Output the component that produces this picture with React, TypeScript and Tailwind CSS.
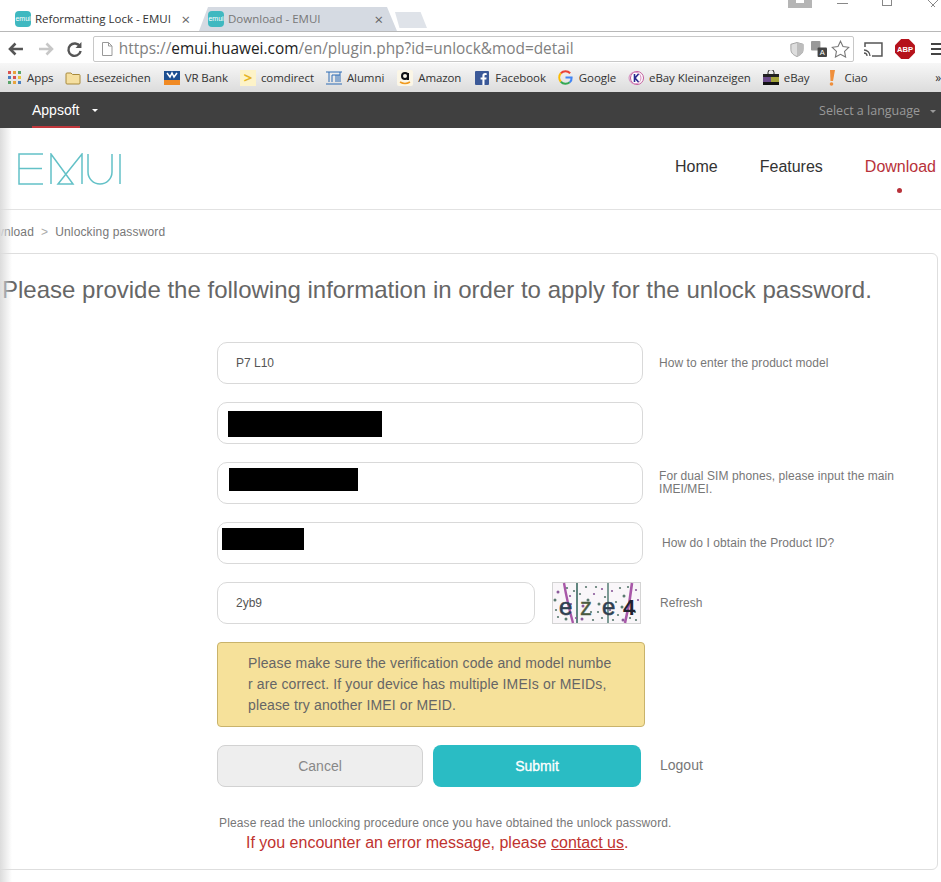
import React from "react";

const EmuiFav = () => (
  <span className="w-[16px] h-[16px] rounded-[4px] bg-[#3fb8c0] text-white text-[7px] leading-[16px] text-center shrink-0 [font-family:'Liberation_Sans',sans-serif]">
    emui
  </span>
);

const Tab = ({ title, active }: { title: string; active?: boolean }) => (
  <div
    className={
      "relative h-[24px] flex items-center shrink-0 [clip-path:polygon(0_100%,9px_0,calc(100%-10px)_0,100%_100%)] " +
      (active ? "w-[200px] bg-white pl-[12px] pr-[13px] text-[#333]" : "w-[198px] -ml-[4px] bg-[#d5dae2] pl-[9px] pr-[14px] text-[#777]")
    }
  >
    <EmuiFav />
    <span className="ml-[4px] text-[11.5px] whitespace-nowrap flex-1">{title}</span>
    <span className="text-[15px] leading-none text-[#666]">×</span>
  </div>
);

const bookmarks: [React.ReactNode, string, number][] = [
  [
    <svg width="15" height="15" viewBox="0 0 15 15">
      {[1, 6, 11].flatMap((y, j) =>
        [1, 6, 11].map((x, i) => (
          <rect key={`${i}${j}`} x={x} y={y} width="3" height="3" fill={["#d9534f", "#e8a33d", "#5aa469", "#4a7fc1", "#d9534f", "#e8c33d", "#5aa469", "#e8a33d", "#4a7fc1"][i + j * 3]} />
        ))
      )}
    </svg>,
    "Apps",
    12,
  ],
  [
    <svg width="16" height="14" viewBox="0 0 16 14">
      <path d="M1 3a1 1 0 0 1 1-1h4l1.5 1.5H14a1 1 0 0 1 1 1V12a1 1 0 0 1-1 1H2a1 1 0 0 1-1-1z" fill="#f5dfa0" stroke="#a88a3c" />
    </svg>,
    "Lesezeichen",
    13,
  ],
  [
    <svg width="16" height="14" viewBox="0 0 16 14">
      <rect width="16" height="9" fill="#1d4f91" />
      <rect y="9" width="16" height="5" fill="#f08a24" />
      <path d="M3 2l3 4 2-4 2 4 3-4" stroke="#fff" strokeWidth="1.5" fill="none" />
    </svg>,
    "VR Bank",
    12,
  ],
  [
    <span className="w-[16px] h-[16px] bg-[#fdf3c8] text-[#e6b422] text-[15px] font-bold leading-[15px] text-center">&gt;</span>,
    "comdirect",
    12,
  ],
  [
    <svg width="16" height="14" viewBox="0 0 16 14">
      <path d="M0 1h16M3 1v10M6 4v7M6 4h4v7M10 4h4M14 1v10M12 4v7M0 13h16" stroke="#2f6db5" strokeWidth="1" fill="none" />
    </svg>,
    "Alumni",
    13,
  ],
  [
    <svg width="16" height="16" viewBox="0 0 16 16">
      <rect width="16" height="16" rx="2" fill="#fbf6e6" />
      <path d="M3 12q5 3 10 0" stroke="#f09a1f" strokeWidth="1.5" fill="none" />
      <circle cx="8" cy="6" r="3" fill="none" stroke="#111" strokeWidth="2" />
      <path d="M11 3v7" stroke="#111" strokeWidth="2" />
    </svg>,
    "Amazon",
    13,
  ],
  [
    <svg width="14" height="14" viewBox="0 0 14 14">
      <rect width="14" height="14" rx="1" fill="#3b5998" />
      <path d="M9.5 14V8.5h1.8l.3-2.1H9.5V5c0-.6.2-1 1-1h1.2V2.200a14 14 0 0 0-1.600-.1C8.500 2.100 7.400 3 7.400 4.800v1.600H5.600v2.100h1.800V14z" fill="#fff" />
    </svg>,
    "Facebook",
    12,
  ],
  [
    <svg width="15" height="15" viewBox="0 0 16 16" fill="none" strokeWidth="2.200">
      <path d="M13 3.500A7 7 0 0 0 3 3.500" stroke="#ea4335" />
      <path d="M3 3.500a7 7 0 0 0 0 9" stroke="#fbbc05" />
      <path d="M3 12.500a7 7 0 0 0 9.500.5" stroke="#34a853" />
      <path d="M12.500 13A6 6 0 0 0 14.500 8H8" stroke="#4285f4" />
    </svg>,
    "Google",
    12,
  ],
  [
    <svg width="16" height="16" viewBox="0 0 16 16">
      <circle cx="9" cy="8" r="6.500" fill="#fff" stroke="#c25b9b" />
      <circle cx="7" cy="8" r="6" fill="none" stroke="#d78ac0" />
      <path d="M6.500 4v8M10.500 4 7 8l3.500 4" stroke="#2a2a8f" strokeWidth="1.600" fill="none" />
    </svg>,
    "eBay Kleinanzeigen",
    12,
  ],
  [
    <svg width="16" height="15" viewBox="0 0 16 15">
      <path d="M5 4V2.500a3 3 0 0 1 6 0V4" fill="none" stroke="#222" />
      <rect y="4" width="16" height="3" fill="#222" />
      <rect y="7" width="8" height="5" fill="#6a4a8a" />
      <rect x="8" y="7" width="8" height="5" fill="#a3a33a" />
      <rect y="12" width="16" height="3" fill="#111" />
    </svg>,
    "eBay",
    14,
  ],
  [
    <svg width="8" height="16" viewBox="0 0 8 16">
      <path d="M2 0h5L5 11H2.500z" fill="#ef8f3c" />
      <circle cx="3.500" cy="14" r="1.800" fill="#ef8f3c" />
    </svg>,
    "Ciao",
    13,
  ],
];

const Field = ({ children, help }: { children?: React.ReactNode; help?: React.ReactNode }) => (
  <div className="flex items-center h-[42px]">
    <div className="w-[426px] h-[42px] shrink-0 rounded-[10px] border border-[#d9d9d9] bg-white flex items-center text-[12px] text-[#555]">
      {children}
    </div>
    {help}
  </div>
);

const Help = ({ children, cls }: { children: React.ReactNode; cls: string }) => (
  <div className={"text-[12px] tracking-[0.07px] leading-[13px] text-[#777] " + cls}>{children}</div>
);

const dots: [number, number][] = [
  [6, 10], [15, 6], [34, 5], [42, 12], [47, 22], [39, 30], [60, 9], [68, 6], [72, 14], [84, 8], [83, 30], [6, 35], [30, 37], [50, 36], [66, 33], [10, 25], [36, 18], [64, 20], [50, 7], [78, 36],
  [3, 18], [18, 14], [22, 9], [28, 12], [31, 24], [44, 5], [53, 15], [58, 28], [70, 25], [76, 5], [86, 18], [4, 28], [14, 37], [24, 36], [41, 38], [61, 38], [71, 38], [84, 38], [46, 30], [19, 22],
];

const Captcha = () => (
  <svg width="89" height="42" viewBox="0 0 89 42" className="shrink-0 ml-[17px] mr-[19px]">
    <rect x="0.500" y="0.500" width="88" height="41" fill="#f9f6f9" stroke="#d4d4d4" />
    <path d="M12 1q3 18 9 40" stroke="#a857a8" strokeWidth="2.400" fill="none" />
    <path d="M25 1v40" stroke="#39695f" strokeWidth="1.600" />
    <path d="M56 1v40" stroke="#39695f" strokeWidth="1.300" />
    <path d="M80 1q-2 20-7 40" stroke="#a857a8" strokeWidth="2.600" fill="none" />
    {dots.map(([x, y], i) => (
      <circle key={i} cx={x} cy={y} r={i % 4 === 0 ? 1.5 : 1.1} fill={i % 3 === 0 ? "#8a5a9a" : "#5a7a70"} />
    ))}
    <text x="7" y="33" fontSize="24" fill="#2e3e50" stroke="#2e3e50" strokeWidth="0.600" fontFamily="'Liberation Sans',sans-serif">e</text>
    <text x="28" y="33" fontSize="24" fill="#4a5a40" stroke="#4a5a40" strokeWidth="0.300" fontFamily="'Liberation Sans',sans-serif">z</text>
    <text x="50" y="33" fontSize="24" fill="#2e3e50" stroke="#2e3e50" strokeWidth="0.600" fontFamily="'Liberation Sans',sans-serif">e</text>
    <text x="71" y="33" fontSize="22" fontWeight="bold" fill="#22222e" fontFamily="'Liberation Sans',sans-serif">4</text>
  </svg>
);

export default function App() {
  return (
    <div className="relative w-[941px] h-[882px] overflow-hidden bg-white [font-family:'Liberation_Sans',Arial,sans-serif]">
      {/* Browser chrome */}
      <div className="h-[92px] flex flex-col [font-family:'Open_Sans','Noto_Sans',sans-serif]">
        <div className="relative h-[32px] flex items-end pl-[3px] border-b border-[#b8b8b8]">
          <Tab title="Reformatting Lock - EMUI" active />
          <Tab title="Download - EMUI" />
          <div className="ml-[-2px] mb-[3px] w-[32px] h-[16px] bg-[#dfe3e9] [clip-path:polygon(0_0,80%_0,100%_100%,14%_100%)]" />
          <div className="absolute right-0 top-0 h-[8px] flex items-start">
            <div className="w-[24px] h-[8px] bg-[#b5b5b5] mr-[25px] flex justify-center">
              <div className="w-[8px] h-[3px] bg-white" />
            </div>
            <div className="w-[11px] h-[4px] border-b border-[#888] mr-[34px]" />
            <div className="w-[10px] h-[6px] border-x border-b border-[#888] mr-[36px]" />
            <svg width="11" height="7" viewBox="0 0 11 7" className="mr-[2px]">
              <path d="M0 0l7 7M10 0 3 7" stroke="#888" />
            </svg>
          </div>
        </div>
        <div className="h-[31px] pt-[3px] flex items-center bg-white">
          <svg width="18" height="16" viewBox="0 0 18 16" className="ml-[7px]">
            <path d="M16 8H3M8.500 2.500 3 8l5.500 5.500" stroke="#555" strokeWidth="2.600" fill="none" />
          </svg>
          <svg width="18" height="16" viewBox="0 0 18 16" className="ml-[12px]">
            <path d="M2 8h13M9.500 2.500 15 8l-5.500 5.500" stroke="#c7c7c7" strokeWidth="2.600" fill="none" />
          </svg>
          <svg width="17" height="17" viewBox="0 0 17 17" className="ml-[11px]">
            <path d="M14 5.500A6.200 6.200 0 1 0 14.700 10" stroke="#555" strokeWidth="2.400" fill="none" />
            <path d="M15.500 1v6h-6z" fill="#555" />
          </svg>
          <div className="ml-[10px] w-[763px] h-[26px] border border-[#c8c8c8] rounded-[2px] flex items-center pl-[7px] pr-[3px] bg-white">
            <svg width="12" height="14" viewBox="0 0 12 14" className="shrink-0">
              <path d="M1.500.500h6l3.500 3.500v9.500h-9.500zM7.500.500V4h3.500" fill="#fff" stroke="#999" />
            </svg>
            <span className="ml-[6px] text-[15.4px] text-[#808080] whitespace-nowrap flex-1">
              https://<span className="text-[#222]">emui.huawei.com</span>/en/plugin.php?id=unlock&amp;mod=detail
            </span>
            <svg width="14" height="17" viewBox="0 0 16 18" className="shrink-0">
              <path d="M8 1l7 2v6c0 4-3 6.500-7 8-4-1.500-7-4-7-8V3z" fill="#ddd" stroke="#999" />
              <path d="M8 1v16c4-1.500 7-4 7-8V3z" fill="#bdbdbd" />
            </svg>
            <svg width="16" height="16" viewBox="0 0 17 17" className="shrink-0 ml-[7px]">
              <rect x="0" y="0" width="10" height="10" rx="1" fill="#999" />
              <rect x="7" y="7" width="10" height="10" rx="1" fill="#444" />
              <text x="12" y="15" fontSize="8" textAnchor="middle" fill="#fff" fontFamily="'Liberation Sans',sans-serif">A</text>
            </svg>
            <svg width="19" height="18" viewBox="0 0 24 23" className="shrink-0 ml-[4px]">
              <path d="M12 1.500l3.200 6.800 7.300 1-5.300 5.200 1.300 7.300-6.500-3.500-6.500 3.500 1.300-7.300L1.500 9.300l7.300-1z" fill="none" stroke="#777" strokeWidth="1.400" />
            </svg>
          </div>
          <svg width="20" height="15" viewBox="0 0 20 15" className="ml-[9px]">
            <path d="M2 5V1h17v13H9" fill="none" stroke="#555" strokeWidth="1.500" />
            <path d="M1 8a6 6 0 0 1 6 6M1 11a3 3 0 0 1 3 3" fill="none" stroke="#555" strokeWidth="1.300" />
          </svg>
          <svg width="20" height="20" viewBox="0 0 21 21" className="ml-[12px]">
            <path d="M6.500 0h8L21 6.500v8L14.500 21h-8L0 14.500v-8z" fill="#b5121b" />
            <text x="10.500" y="13.500" fontSize="8" fontWeight="bold" textAnchor="middle" fill="#fff" fontFamily="'Liberation Sans',sans-serif">ABP</text>
          </svg>
          <div className="ml-[16px] w-[10px] h-[13px] flex flex-col gap-[3px]">
            <div className="h-[2px] bg-[#444]" />
            <div className="h-[2px] bg-[#444]" />
            <div className="h-[2px] bg-[#444]" />
          </div>
        </div>
        <div className="h-[29px] flex items-center pl-[6px] bg-gradient-to-b from-[#f7f7f7] to-[#dcdcdc] text-[11.5px] tracking-[-0.09px] text-[#333] whitespace-nowrap relative">
          {bookmarks.map(([icon, label, gap]) => (
            <div key={label} className="flex items-center shrink-0" style={{ marginRight: gap }}>
              <span className="w-[16px] flex justify-center items-center mr-[5px]">{icon}</span>
              <span>{label}</span>
            </div>
          ))}
          <span className="absolute right-0 text-[12px] text-[#333]">»</span>
        </div>
      </div>

      {/* Dark language bar */}
      <div className="h-[36px] bg-[#404040] flex items-stretch justify-between pr-[5px]">
        <div className="ml-[32px] relative flex items-center text-[14px] text-white">
          <span className="border-b-2 border-[#c0373c] h-full flex items-center pt-[2px] w-[48px] whitespace-nowrap">Appsoft</span>
          <span className="ml-[12px] w-0 h-0 border-x-[3px] border-x-transparent border-t-[3px] border-t-white" />
        </div>
        <div className="flex items-center pt-[2px] text-[12.5px] text-[#999] [font-family:'Open_Sans',sans-serif]">
          <span>Select a language</span>
          <span className="ml-[10px] w-0 h-0 border-x-[3px] border-x-transparent border-t-[3px] border-t-[#999]" />
        </div>
      </div>

      {/* Logo and nav */}
      <div className="h-[82px] mx-0 flex items-start justify-between border-b border-[#e2e2e2]">
        <svg width="104" height="32" viewBox="0 0 104 32" className="ml-[18px] mt-[25px]" fill="none" stroke="#63c1c7" strokeWidth="1.500">
          <path d="M25 1H1v30h24M1 15.500h23" />
          <path d="M33 31V1L55 31H40L64 1V31" />
          <path d="M70 1v18a12 12 0 0 0 24 0V1" />
          <path d="M102 1v30" />
        </svg>
        <nav className="flex text-[16px] mt-[27px] text-[#333] mr-[5px]">
          <span className="mr-[42px]">Home</span>
          <span className="mr-[42px]">Features</span>
          <span className="relative text-[#b8323a]">
            Download
            <span className="absolute left-[32px] top-[33px] w-[5px] h-[5px] rounded-full bg-[#b8323a]" />
          </span>
        </nav>
      </div>

      {/* Breadcrumb */}
      <div className="h-[43px] flex items-center -ml-[24px] pt-[1px] text-[12px] tracking-[0.15px] text-[#777]">
        <span className="w-[58px] text-right">Download</span>
        <span className="mx-[7px] text-[#aaa]">&gt;</span>
        <span>Unlocking password</span>
      </div>

      {/* Card */}
      <div className="-ml-[10px] w-[948px] h-[617px] border border-[#dedede] rounded-[6px] bg-white">
        <h1 className="mt-[20px] ml-[11px] text-[24px] leading-[32px] text-[#666] whitespace-nowrap">
          Please provide the following information in order to apply for the unlock password.
        </h1>
        <div className="mt-[36px] ml-[226px] flex flex-col gap-[18px]">
          <Field help={<Help cls="ml-[16px]">How to enter the product model</Help>}>
            <span className="ml-[18px]">P7 L10</span>
          </Field>
          <Field>
            <div className="ml-[10px] mt-[2px] w-[154px] h-[26px] bg-black" />
          </Field>
          <Field help={<Help cls="ml-[16px] w-[250px]">For dual SIM phones, please input the main IMEI/MEI.</Help>}>
            <div className="ml-[11px] -mt-[8px] w-[129px] h-[23px] bg-black" />
          </Field>
          <Field help={<Help cls="ml-[19px]">How do I obtain the Product ID?</Help>}>
            <div className="ml-[4px] -mt-[8px] w-[82px] h-[22px] bg-black" />
          </Field>
          <div className="flex items-center h-[42px]">
            <div className="w-[318px] h-[42px] shrink-0 rounded-[10px] border border-[#d9d9d9] bg-white flex items-center text-[12px] text-[#555]">
              <span className="ml-[18px]">2yb9</span>
            </div>
            <Captcha />
            <Help cls="">Refresh</Help>
          </div>
        </div>
        <div className="mt-[18px] ml-[226px] w-[428px] h-[85px] rounded-[4px] border border-[#c9b36b] bg-[#f6e19a] pl-[30px] flex flex-col justify-center text-[14px] tracking-[0.13px] leading-[21px] text-[#666] whitespace-nowrap">
          <div>Please make sure the verification code and model numbe</div>
          <div>r are correct. If your device has multiple IMEIs or MEIDs,</div>
          <div>please try another IMEI or MEID.</div>
        </div>
        <div className="mt-[18px] ml-[226px] flex items-center text-[14px]">
          <div className="w-[206px] h-[42px] rounded-[8px] border border-[#d2d2d2] bg-[#eeeeee] text-[#888] flex items-center justify-center">Cancel</div>
          <div className="ml-[10px] w-[208px] h-[42px] rounded-[8px] bg-[#2abcc4] text-white flex items-center justify-center pt-[1px] [-webkit-text-stroke:0.3px_white]">Submit</div>
          <div className="ml-[19px] -mt-[2px] text-[#777]">Logout</div>
        </div>
        <div className="mt-[28px] ml-[228px] text-[12px] tracking-[0.13px] leading-[16px] text-[#777]">
          Please read the unlocking procedure once you have obtained the unlock password.
        </div>
        <div className="mt-[1px] ml-[255px] text-[16px] leading-[22px] text-[#c0332f] whitespace-nowrap">
          If you encounter an error message, please <span className="underline">contact us</span>.
        </div>
      </div>

      {/* Window-edge shade */}
      <div className="absolute left-0 top-[128px] bottom-0 w-[12px] bg-gradient-to-r from-[#dcdcdc] to-transparent pointer-events-none" />
    </div>
  );
}
